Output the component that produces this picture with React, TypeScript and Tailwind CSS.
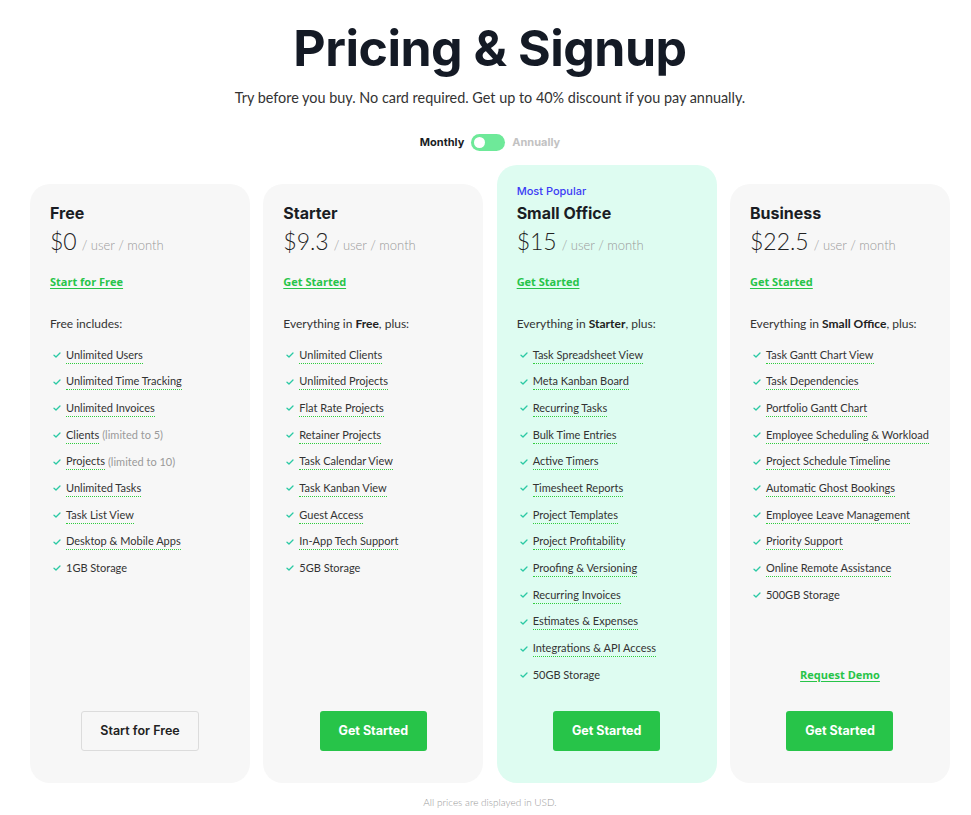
import React from "react";

type Feature = { label: string; note?: string; plain?: boolean };

type Plan = {
  name: string;
  price: string;
  link: string;
  intro: React.ReactNode;
  features: Feature[];
  popular?: boolean;
  cta: string;
  outline?: boolean;
  demo?: boolean;
};

const plans: Plan[] = [
  {
    name: "Free",
    price: "$0",
    link: "Start for Free",
    intro: <>Free includes:</>,
    features: [
      { label: "Unlimited Users" },
      { label: "Unlimited Time Tracking" },
      { label: "Unlimited Invoices" },
      { label: "Clients", note: "(limited to 5)" },
      { label: "Projects", note: "(limited to 10)" },
      { label: "Unlimited Tasks" },
      { label: "Task List View" },
      { label: "Desktop & Mobile Apps" },
      { label: "1GB Storage", plain: true },
    ],
    cta: "Start for Free",
    outline: true,
  },
  {
    name: "Starter",
    price: "$9.3",
    link: "Get Started",
    intro: (
      <>
        Everything in <b className="font-bold text-[#222]">Free</b>, plus:
      </>
    ),
    features: [
      { label: "Unlimited Clients" },
      { label: "Unlimited Projects" },
      { label: "Flat Rate Projects" },
      { label: "Retainer Projects" },
      { label: "Task Calendar View" },
      { label: "Task Kanban View" },
      { label: "Guest Access" },
      { label: "In-App Tech Support" },
      { label: "5GB Storage", plain: true },
    ],
    cta: "Get Started",
  },
  {
    name: "Small Office",
    price: "$15",
    link: "Get Started",
    intro: (
      <>
        Everything in <b className="font-bold text-[#222]">Starter</b>, plus:
      </>
    ),
    features: [
      { label: "Task Spreadsheet View" },
      { label: "Meta Kanban Board" },
      { label: "Recurring Tasks" },
      { label: "Bulk Time Entries" },
      { label: "Active Timers" },
      { label: "Timesheet Reports" },
      { label: "Project Templates" },
      { label: "Project Profitability" },
      { label: "Proofing & Versioning" },
      { label: "Recurring Invoices" },
      { label: "Estimates & Expenses" },
      { label: "Integrations & API Access" },
      { label: "50GB Storage", plain: true },
    ],
    cta: "Get Started",
    popular: true,
  },
  {
    name: "Business",
    price: "$22.5",
    link: "Get Started",
    intro: (
      <>
        Everything in <b className="font-bold text-[#222]">Small Office</b>, plus:
      </>
    ),
    features: [
      { label: "Task Gantt Chart View" },
      { label: "Task Dependencies" },
      { label: "Portfolio Gantt Chart" },
      { label: "Employee Scheduling & Workload" },
      { label: "Project Schedule Timeline" },
      { label: "Automatic Ghost Bookings" },
      { label: "Employee Leave Management" },
      { label: "Priority Support" },
      { label: "Online Remote Assistance" },
      { label: "500GB Storage", plain: true },
    ],
    cta: "Get Started",
    demo: true,
  },
];

const heading = "font-['Inter',sans-serif]";
const body = "font-['Lato',sans-serif]";
const linkFont = "font-['Open_Sans',sans-serif]";

function Check() {
  return (
    <svg width="8" height="8" viewBox="0 0 8 8" className="shrink-0">
      <path
        d="M1 4.2 L3 6 L7 2"
        fill="none"
        stroke="#2bc9a4"
        strokeWidth="1.3"
        strokeLinecap="round"
        strokeLinejoin="round"
      />
    </svg>
  );
}

function PlanCard({ plan }: { plan: Plan }) {
  return (
    <div
      className={
        "flex flex-col rounded-[20px] px-5 pb-8 " +
        (plan.popular ? "bg-[#defcf1] pt-[19px]" : "mt-[19px] bg-[#f7f7f7] pt-[17px]")
      }
    >
      {plan.popular && (
        <div className={`${heading} mb-[3px] text-[11px] font-medium leading-[14px] text-[#3b3bf5]`}>
          Most Popular
        </div>
      )}
      <h3 className={`${heading} text-[16px] font-bold leading-6 text-[#1a1d24]`}>
        {plan.name}
      </h3>
      <div className="mt-[2px] flex items-baseline gap-[5px]">
        <span className={`${body} text-[23px] font-light leading-7 text-[#222]`}>
          {plan.price}
        </span>
        <span className={`${body} text-[13px] font-light text-[#999]`}>/ user / month</span>
      </div>
      <a className={`${linkFont} mt-[18px] self-start text-[11px] font-bold leading-4 text-[#27c449] underline underline-offset-2`}>
        {plan.link}
      </a>
      <p className={`${body} mt-[26px] text-[12px] leading-4 text-[#333]`}>{plan.intro}</p>
      <ul className="mt-[15px] flex flex-col gap-[9.7px]">
        {plan.features.map((f) => (
          <li key={f.label} className={`${body} flex items-center gap-[5px] whitespace-nowrap text-[11px] leading-4 text-[#333]`}>
            <span className="ml-[3px]">
              <Check />
            </span>
            <span className={f.plain ? "" : "border-b border-dotted border-[#2fcc3c]"}>
              {f.label}
            </span>
            {f.note && <span className="-ml-[2px] text-[#9a9a9a]">{f.note}</span>}
          </li>
        ))}
      </ul>
      <div className="mt-auto flex flex-col items-center">
        {plan.demo && (
          <a className={`${linkFont} mb-[28px] text-[11px] font-bold leading-4 text-[#27c449] underline underline-offset-2`}>
            Request Demo
          </a>
        )}
        {plan.outline ? (
          <button className={`${heading} h-10 w-[118px] rounded-[3px] border border-[#dcdcdc] bg-[#f7f7f7] text-[12.5px] font-semibold text-[#222]`}>
            {plan.cta}
          </button>
        ) : (
          <button className={`${heading} h-10 w-[107px] rounded-[3px] bg-[#27c449] text-[12.5px] font-bold text-white`}>
            {plan.cta}
          </button>
        )}
      </div>
    </div>
  );
}

export default function App() {
  return (
    <div className="flex min-h-[815px] flex-col items-center bg-white pl-[9px]">
      <h1 className={`${heading} mt-[18px] text-[50px] font-bold leading-[60px] tracking-[-0.5px] text-[#141a25]`}>
        Pricing &amp; Signup
      </h1>
      <p className={`${body} mt-[10px] text-[14.4px] leading-5 text-[#333]`}>
        Try before you buy. No card required. Get up to 40% discount if you pay annually.
      </p>
      <div className={`${heading} mt-[26px] flex items-center gap-[7px] text-[11px] font-bold`}>
        <span className="text-[#1a1d24]">Monthly</span>
        <span className="flex h-[17px] w-[34px] items-center rounded-full bg-[#6ee999] px-[3px]">
          <span className="h-[11px] w-[11px] rounded-full bg-white" />
        </span>
        <span className="text-[#c2c2c2]">Annually</span>
      </div>
      <div className="mt-[14px] grid h-[618px] w-[920px] grid-cols-4 gap-[13.3px]">
        {plans.map((p) => (
          <PlanCard key={p.name} plan={p} />
        ))}
      </div>
      <p className={`${body} mt-[12px] text-[10px] font-light text-[#999]`}>
        All prices are displayed in USD.
      </p>
    </div>
  );
}
